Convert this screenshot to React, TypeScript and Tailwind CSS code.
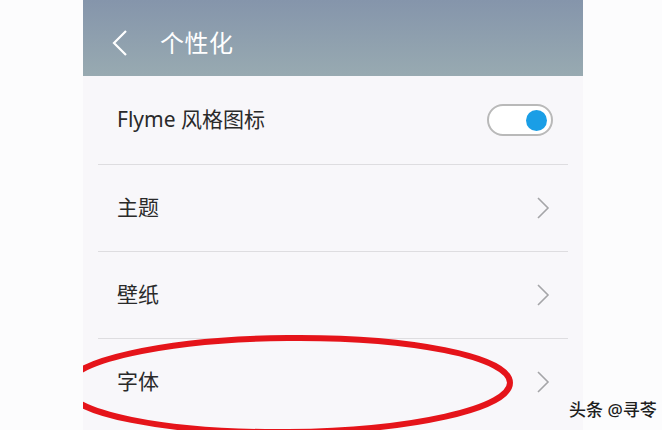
const rows = ["主题", "壁纸", "字体"];

const font = { fontFamily: '"Noto Sans", "Noto Sans CJK SC", sans-serif' };

function Toggle() {
  return (
    <div className="flex items-center justify-end w-[66px] h-[32px] rounded-full border-2 border-[#b9b9b9] bg-white pr-[4px]">
      <div className="w-[21px] h-[21px] rounded-full bg-[#1a9ee6]" />
    </div>
  );
}

function Chevron() {
  return (
    <svg width="14" height="24" viewBox="0 0 14 24" className="mr-[2px]">
      <polyline points="2,2 12,12 2,22" fill="none" stroke="#a5a5a8" strokeWidth="1.6" />
    </svg>
  );
}

function Row({ label }: { label: string }) {
  return (
    <div className="flex items-center justify-between h-[87px] pl-[19px] pr-[16px] border-t border-[#dedde0]">
      <span className="text-[21px] text-[#2a2a2a]">{label}</span>
      <Chevron />
    </div>
  );
}

export default function App() {
  return (
    <div className="w-[662px] h-[430px] bg-[#fcfcfd] flex overflow-hidden relative" style={font}>
      <div className="w-[83px] shrink-0" />
      <div className="w-[500px] shrink-0 flex flex-col bg-[#f8f7fa] relative overflow-hidden">
        {/* header */}
        <div className="h-[76px] shrink-0 bg-gradient-to-b from-[#8595ab] to-[#98aab1] flex items-center pt-[10px]">
          <svg width="18" height="28" viewBox="0 0 18 28" className="ml-[28px]">
            <polyline points="15,2 3,14 15,26" fill="none" stroke="#fff" strokeWidth="2.2" />
          </svg>
          <span className="text-[24px] text-white ml-[31px] tracking-[0.5px]">个性化</span>
        </div>
        <div className="flex flex-col px-[15px]">
          <div className="flex items-center justify-between h-[88px] pl-[19px] pr-[15px]">
            <span className="text-[21px] text-[#2a2a2a]">Flyme 风格图标</span>
            <Toggle />
          </div>
          {rows.map((r) => (
            <Row key={r} label={r} />
          ))}
        </div>
        {/* red hand-drawn annotation */}
        <svg className="absolute left-0 top-[330px]" width="500" height="110" viewBox="0 0 500 110">
          <ellipse cx="205" cy="55" rx="222" ry="47" fill="none" stroke="#e5141a" strokeWidth="6" transform="rotate(-0.6 205 55)" />
        </svg>
      </div>
      <span
        className="absolute left-[569px] top-[397px] text-[17px] font-medium text-[#1e1e1e] [text-shadow:0_0_2px_#fff]"
        style={font}
      >
        头条 @寻苓
      </span>
    </div>
  );
}
